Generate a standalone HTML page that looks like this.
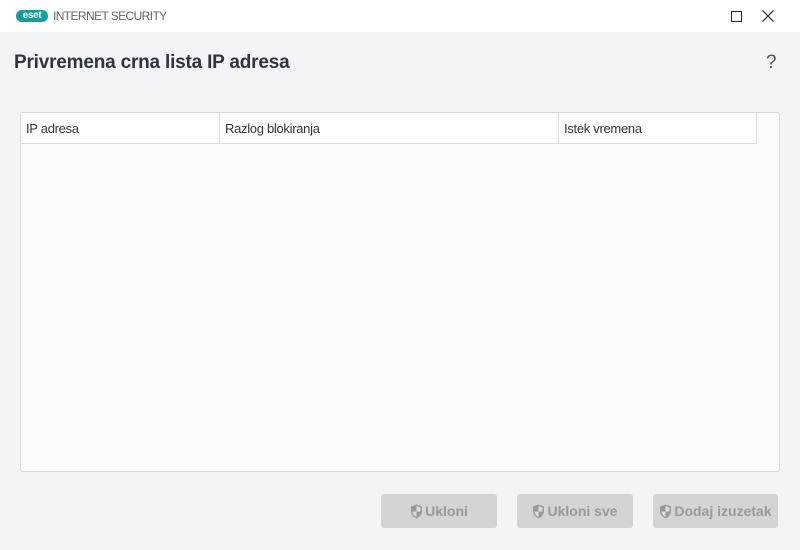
<!DOCTYPE html>
<html><head><meta charset="utf-8"><style>
*{margin:0;padding:0;box-sizing:border-box}
body{width:800px;height:550px;background:#f3f4f6;font-family:"Liberation Sans",sans-serif;position:relative;overflow:hidden}
.tb{position:absolute;left:0;top:0;width:800px;height:32px;background:#fff}
.logo{position:absolute;left:16px;top:10px;width:32px;height:12px;background:#159b9b;border-radius:6px;color:#fff;font-size:10px;font-weight:bold;line-height:12px;text-align:center;letter-spacing:-0.3px}
.prod{position:absolute;left:53px;top:9px;font-size:12px;color:#666;letter-spacing:-0.6px}
h1{position:absolute;left:14px;top:52px;font-size:19px;font-weight:bold;color:#2e3440;letter-spacing:-0.2px}
.q{position:absolute;left:766px;top:52px;font-size:19px;color:#555}
.box{position:absolute;left:20px;top:112px;width:760px;height:360px;background:#fcfcfc;border:1px solid #d8d8d8;border-radius:3px}
.hd{position:absolute;left:0;top:0;width:736px;height:31px;border-bottom:1px solid #dcdcdc;background:#fff}
.c{position:absolute;top:0;height:30px;line-height:31px;font-size:13px;color:#333;padding-left:5px;border-right:1px solid #dcdcdc;letter-spacing:-0.3px}
.btn{position:absolute;top:494px;height:34px;background:#d4d4d4;border-radius:3px;color:#999;font-weight:bold;font-size:14px;display:flex;align-items:center;justify-content:center;gap:2px}
</style></head><body>
<div class="tb">
<div class="logo">eset</div>
<div class="prod">INTERNET SECURITY</div>
<svg style="position:absolute;left:731px;top:11px" width="11" height="11"><rect x="0.5" y="0.5" width="10" height="10" fill="none" stroke="#222"/></svg>
<svg style="position:absolute;left:762px;top:10px" width="12" height="12"><path d="M0.5 0.5L11.5 11.5M11.5 0.5L0.5 11.5" stroke="#222" stroke-width="1.2"/></svg>
</div>
<h1>Privremena crna lista IP adresa</h1>
<div class="q">?</div>
<div class="box"><div class="hd">
<div class="c" style="left:0;width:199px">IP adresa</div>
<div class="c" style="left:199px;width:339px">Razlog blokiranja</div>
<div class="c" style="left:538px;width:198px">Istek vremena</div>
</div></div>
<div class="btn" style="left:381px;width:116px"><svg width="13" height="15" viewBox="0 0 13 15"><path d="M6.5 0.5L12 2.5V7c0 3.5-2.5 6-5.5 7.5C3.5 13 1 10.5 1 7V2.5z" fill="#999"/><path d="M6.5 2L10.5 3.5V7.5H6.5zM6.5 7.5H2.5C2.8 10 4.5 12 6.5 13z" fill="#ddd"/></svg>Ukloni</div>
<div class="btn" style="left:517px;width:116px"><svg width="13" height="15" viewBox="0 0 13 15"><path d="M6.5 0.5L12 2.5V7c0 3.5-2.5 6-5.5 7.5C3.5 13 1 10.5 1 7V2.5z" fill="#999"/><path d="M6.5 2L10.5 3.5V7.5H6.5zM6.5 7.5H2.5C2.8 10 4.5 12 6.5 13z" fill="#ddd"/></svg>Ukloni sve</div>
<div class="btn" style="left:653px;width:125px"><svg width="13" height="15" viewBox="0 0 13 15"><path d="M6.5 0.5L12 2.5V7c0 3.5-2.5 6-5.5 7.5C3.5 13 1 10.5 1 7V2.5z" fill="#999"/><path d="M6.5 2L10.5 3.5V7.5H6.5zM6.5 7.5H2.5C2.8 10 4.5 12 6.5 13z" fill="#ddd"/></svg>Dodaj izuzetak</div>
</body></html>
